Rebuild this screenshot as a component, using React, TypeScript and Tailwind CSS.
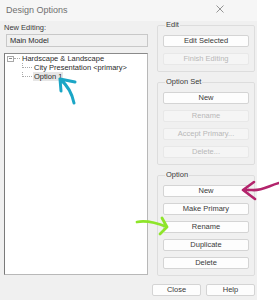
import React from 'react';

const font = { fontFamily: '"Liberation Sans", Arial, sans-serif' };

function Btn({ label, disabled }: { label: string; disabled?: boolean }) {
  return (
    <div
      className={`h-[12px] flex items-center justify-center rounded-[2px] border text-[7.5px] leading-none ${
        disabled
          ? 'border-[#e8e8e8] bg-[#f5f5f5] text-[#b8b8b8]'
          : 'border-[#d4d4d4] bg-[#fdfdfd] text-[#3a3a3a]'
      }`}
    >
      {label}
    </div>
  );
}

function Group({ title, children }: { title: string; children: React.ReactNode }) {
  return (
    <fieldset className="border border-[#dddddd] rounded-[2px] px-[5px] pb-[6px] pt-[6px]">
      <legend className="ml-[2px] px-[1px] text-[7.5px] leading-[8px] text-[#3a3a3a]">{title}</legend>
      <div className="flex flex-col gap-[6px]">{children}</div>
    </fieldset>
  );
}

export default function App() {
  return (
    <div className="relative w-[279px] h-[300px] bg-white flex overflow-hidden" style={font}>
      <div className="w-[257px] h-[300px] bg-[#f0f0f0] flex flex-col">
        {/* title */}
        <div className="h-[21px] bg-[#f6f6f6] flex items-center justify-between pl-[6px] pr-[33px]">
          <span className="text-[9px] text-[#707070]">Design Options</span>
          <svg width="8" height="8" viewBox="0 0 8 8" className="mt-[-4px]">
            <path d="M0.5 0.5 L7.5 7.5 M7.5 0.5 L0.5 7.5" stroke="#8a8a8a" strokeWidth="0.9" />
          </svg>
        </div>

        <div className="flex flex-1">
          {/* left */}
          <div className="w-[148px] pl-[4px] flex flex-col">
            <div className="h-[13px] pt-[3px] text-[7.5px] leading-none text-[#3a3a3a]">New Editing:</div>
            <div className="ml-[2px] h-[13px] border border-[#c8c8c8] bg-[#f0f0f0] flex items-center px-[3px] text-[7.5px] leading-none text-[#2a2a2a]">
              Main Model
            </div>
            <div className="mt-[6px] h-[222px] bg-white border border-[#b8b8b8] border-t-[#8a8a8a] border-l-[#7a7a7a] text-[7.5px] leading-none text-[#2a2a2a]">
              <div className="flex items-center h-[9px]">
                <div className="ml-[2px] w-[7px] h-[6px] border border-[#a8a8a8] flex items-center justify-center">
                  <div className="w-[3px] h-px bg-[#888]" />
                </div>
                <div className="w-[6px] border-t border-dotted border-[#aaa]" />
                <span className="ml-[2px]">Hardscape &amp; Landscape</span>
              </div>
              <div className="flex h-[9px]">
                <div className="ml-[17px] w-[10px] border-l border-b border-dotted border-[#aaa] h-[5px]" />
                <span className="ml-[2px] pt-[1px]">City Presentation &lt;primary&gt;</span>
              </div>
              <div className="flex h-[9px]">
                <div className="ml-[17px] w-[10px] border-l border-b border-dotted border-[#aaa] h-[5px]" />
                <span className="ml-[1px] px-[1px] h-[9px] pt-[1px] bg-[#e6e6e6]">Option 1</span>
              </div>
            </div>
          </div>

          {/* right */}
          <div className="ml-[9px] w-[98px] flex flex-col gap-[6px]">
            <Group title="Edit">
              <Btn label="Edit Selected" />
              <Btn label="Finish Editing" disabled />
            </Group>
            <Group title="Option Set">
              <Btn label="New" />
              <Btn label="Rename" disabled />
              <Btn label="Accept Primary..." disabled />
              <Btn label="Delete..." disabled />
            </Group>
            <Group title="Option">
              <Btn label="New" />
              <Btn label="Make Primary" />
              <Btn label="Rename" />
              <Btn label="Duplicate" />
              <Btn label="Delete" />
            </Group>
          </div>
        </div>

        {/* footer */}
        <div className="h-[16px] flex justify-end gap-[5px] pr-[2px] items-start">
          <div className="w-[49px]"><Btn label="Close" /></div>
          <div className="w-[49px]"><Btn label="Help" /></div>
        </div>
      </div>

      {/* annotation arrows */}
      <svg className="absolute left-0 top-0 pointer-events-none" width="279" height="300" viewBox="0 0 279 300">
        <g fill="none" strokeLinecap="round" strokeLinejoin="round">
          <path d="M74 103 C72 93, 67 85, 60 79 M60 79 L75 82 M60 79 L61 91" stroke="#1ba6c6" strokeWidth="3" />
          <path d="M279 183 C268 186, 262 191, 252 190 L243 190 M243 190 L254 182 M243 190 L255 199" stroke="#b3246c" strokeWidth="2.6" />
          <path d="M137 222 C147 220, 157 223, 167 227 M167 227 L162 218 M167 227 L160 234" stroke="#8ee52a" strokeWidth="2.8" />
        </g>
      </svg>
    </div>
  );
}
